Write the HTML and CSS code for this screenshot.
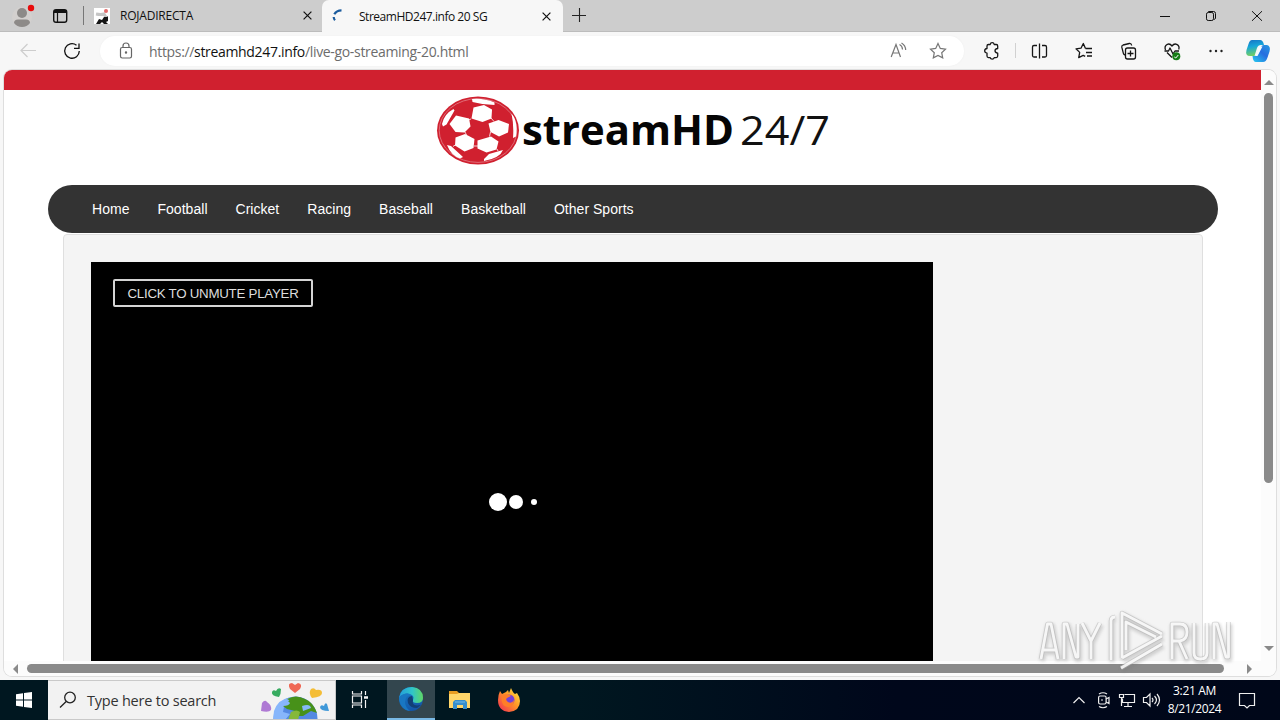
FILE: index.html
```html
<!DOCTYPE html>
<html lang="en">
<head>
<meta charset="utf-8">
<title>StreamHD247.info 20 SG</title>
<link rel="stylesheet" href="styles.css">
</head>
<body>
<div class="desktop">
  <header class="tabs">
    <svg class="profile" width="48" height="32" viewBox="0 0 48 32"><circle cx="22" cy="17" r="10" fill="#d3d0ce"/><circle cx="22" cy="13" r="5" fill="#8d8a88"/><path d="M14 23q0-3.500 4-3.500h8q4 0 4 3.500q-3 4-8 4t-8-4Z" fill="#8d8a88"/><circle cx="31" cy="8" r="3.200" fill="#e80c0c"/></svg>
    <svg class="workspace" width="35" height="32" viewBox="48 0 35 32"><rect x="53.700" y="9.700" width="13" height="12.600" rx="2.300" fill="none" stroke="#111" stroke-width="1.400"/><path d="M54 11.500h13" stroke="#111" stroke-width="3"/><path d="M57.500 12v10" stroke="#111" stroke-width="1.200"/></svg>
    <div class="tab tab-idle">
      <svg width="16" height="16" viewBox="0 0 16 16"><path fill="#fff" d="M0 0h16v16H0z"/><path d="M2 6q5 1 8 0l3 5" stroke="#c5c5c5" stroke-width="3" fill="none"/><circle cx="12" cy="3" r="2" fill="#e36a6a"/><path d="M2 16l3-5 3 1 2-3 3 0 1-1v5l-2 1 2 2h-4l-2-2-2 2Z" fill="#171717"/></svg>
      <span class="title title-a">ROJADIRECTA</span>
      <svg class="x" width="9" height="9" viewBox="0 0 9 9"><path d="M.6.6l7.800 7.800M8.400.6L.6 8.400"/></svg>
    </div>
    <div class="tab tab-on">
      <svg width="14" height="16" viewBox="331 7 14 16"><path d="M341.500 9.300Q336.500 9.300 334.300 13.300M333.700 16Q333.800 18 335 19.300" fill="none" stroke="#1b5c9e" stroke-width="2.200"/></svg>
      <span class="title title-b">StreamHD247.info 20 SG</span>
      <svg class="x" width="9" height="9" viewBox="0 0 9 9"><path d="M.6.6l7.800 7.800M8.400.6L.6 8.400"/></svg>
    </div>
    <svg class="plus" width="14" height="14" viewBox="0 0 14 14"><path d="M0 7.500h14M7.500 0v14" stroke="#222" stroke-width="1.100"/></svg>
    <svg class="window-buttons" width="138" height="32" viewBox="1142 0 138 32" fill="none" stroke="#111"><path d="M1160 16.500h10M1252 11.200l10 9.600M1262 11.200l-10 9.600"/><rect x="1206.500" y="12.500" width="7" height="8" rx="1.700"/><path d="M1208.500 12v-.5h5q2 0 2 2v5l-1.500 1"/></svg>
  </header>

  <div class="toolbar">
    <svg class="nav-icons" width="100" height="38" viewBox="0 32 100 38" fill="none"><path d="M20.500 50.500H36M27.500 44L21 50.500l6.500 6.500" stroke="#cdcdcd" stroke-width="1.200"/><path d="M76.500 45.200A7.300 7.300 0 1 0 79.300 51M79 43.500v4.800h-5" stroke="#111" stroke-width="1.300"/></svg>
    <div class="address">
      <svg width="14" height="18" viewBox="119 42 14 18" fill="none" stroke="#666" stroke-width="1.200"><rect x="120.500" y="47.500" width="11" height="10.500" rx="1.700"/><path d="M123 47v-1q0-3 3-3t3 3v1"/><circle cx="126" cy="52.500" r=".6" fill="#666"/></svg>
      <span class="url">https://<b>streamhd247.info</b>/live-go-streaming-20.html</span>
      <svg class="address-tools" width="84" height="30" viewBox="880 36 84 30" fill="none" stroke="#777" stroke-width="1.200"><path d="M891.200 57l4.800-12.500L900.500 57M893 53h6M899.500 44.500q3 1.500 3 5M901.500 43q4 2.300 4.200 7"/><path d="M938 43.500l2.300 4.900 5.200.7-3.800 3.600 1 5.200-4.700-2.500-4.700 2.500 1-5.200-3.800-3.600 5.200-.7Z"/></svg>
    </div>
    <svg class="tools" width="316" height="38" viewBox="964 32 316 38" fill="none" stroke="#161616" stroke-width="1.300" stroke-linejoin="round">
      <path d="M988.500 44.500h1.700q.3-1.800 2-1.800t2 1.800h2q1.500 0 1.500 1.500v2.500q-2.700.3-2.700 2.300t2.700 2.300v3q0 1.500-1.500 1.500h-2q-.3 1.600-2 1.600t-2-1.600h-1.700q-1.500 0-1.500-1.500v-3q-2.300-.3-2.300-2.300t2.300-2.300V46q0-1.500 1.500-1.500Z"/>
      <path d="M1015.500 43v15" stroke="#d1d1d1" stroke-width="1"/>
      <path d="M1037 45.500h-3q-1.500 0-1.500 1.500v8.500q0 1.500 1.500 1.500h3M1042 45.500h3q1.500 0 1.500 1.500v8.500q0 1.500-1.500 1.500h-3M1039.500 43.500v15"/>
      <path d="M1085.500 48.500l-2.200-5-2.300 4.700-5 .6 3.700 3.600-1 5.200 4.500-2.300 2 1M1085.500 48.500h6.500M1086 52.500h6M1087 56h5"/>
      <rect x="1125.500" y="48" width="10" height="11" rx="2"/><path d="M1130.500 50.500v6M1127.500 53.500h6M1125 55q-1.500-.3-1.700-1.800l-1.500-6q-.3-1.700 1.300-2.200l6.200-1.500q2-.3 2.400 2"/>
      <path d="M1172 57.500l-5-5M1165.500 50q-1.500-4 1.800-5.700 2.700-1 4.700 1.700 2-2.700 4.700-1.700 3.300 1.700 2 5.200M1164.500 51h4l1.500-3 3 6 2-3h4"/><circle cx="1176.300" cy="56.300" r="4" fill="#167d16" stroke="none"/><path d="M1174.300 57l1.500 1 2.500-3" stroke="#fff" stroke-width="1"/>
      <g fill="#222" stroke="none"><circle cx="1210.500" cy="51" r="1.200"/><circle cx="1216" cy="51" r="1.200"/><circle cx="1221.500" cy="51" r="1.200"/></g>
      <defs><linearGradient id="cp1" x1="0" y1="0" x2=".2" y2="1"><stop offset="0" stop-color="#1672c4"/><stop offset=".45" stop-color="#15a6d9"/><stop offset="1" stop-color="#72cf65"/></linearGradient><linearGradient id="cp2" x1="1" y1="0" x2=".2" y2="1"><stop offset="0" stop-color="#269ae2"/><stop offset=".5" stop-color="#286ddf"/><stop offset="1" stop-color="#27bced"/></linearGradient></defs>
      <path d="M1252 40h8q3 0 4 5h-3q-3 0-4 3l-2.500 8h-4.500q-5 0-3.500-6l2-6q1.200-4 3.500-4Z" fill="url(#cp1)" stroke="none"/><path d="M1264 45h3q4 1 2.500 6.500l-2 6q-1.500 4.500-4.500 4.500h-7q-3 0-3.500-6h2q3 0 4-3l2-5q1-3 3.500-3Z" fill="url(#cp2)" stroke="none"/><path d="M1259.500 46.500h3L1257.500 56h-2Z" fill="#f5fbff" stroke="none"/>
    </svg>
  </div>

  <main class="browser-view">
    <div class="page">
      <div class="red-bar"></div>
      <svg class="brand" width="400" height="95" viewBox="433 90 400 95">
        <ellipse cx="478" cy="130.500" rx="41" ry="34" fill="#d0202f"/><ellipse cx="478" cy="130.500" rx="38.800" ry="31.900" fill="none" stroke="#eaa0a7" stroke-width=".6"/>
        <g fill="#fff"><path d="M473.500 107.500l10.500-2.500 8 4.500-.5 9-9 3.500-11-3.500Z"/><path d="M456 115.500l13 3 1.500 8-6 6-9-.5-6-8Z"/><path d="M488.500 123.500l10-3.500 10.500 4-1 8.500-9 4-8.500-4.500Z"/><path d="M455.500 137.500l9.500-3.500 9.500 5-1 9-9 3.500-9.500-6Z"/><path d="M477.500 140.500l13.500-4 7.500 5-2 8-10 3-9-4Z"/><path d="M472 99q12-1 22.500 3.500l0 2.500q-11 0-22-3ZM442 124q2-10 11.500-15l1 1.500-8 14-3.500 2ZM511.500 113.500q7 8 4.500 23l-3 1.500q1-13-1.500-24.500ZM447 145l4 1 12 11-3 1.500q-9-3-13-13.500ZM484 159l5-5 14-4q-3 8-19 11Z"/></g>
        <path d="M491 118l3 3.500M471 119l-2.500 1M465 132l1.500 3M490.500 132l-1 4.500M474 146h4M456 144.500l-3 2M497 149l1 2" stroke="#fff" stroke-width=".8"/>
        <text class="brand-bold" x="522" y="145" textLength="212" lengthAdjust="spacingAndGlyphs">streamHD</text>
        <text class="brand-light" x="740" y="145" textLength="90" lengthAdjust="spacingAndGlyphs">24/7</text>
      </svg>
      <nav class="menu"><a>Home</a><a>Football</a><a>Cricket</a><a>Racing</a><a>Baseball</a><a>Basketball</a><a>Other Sports</a></nav>
      <section class="content"><div class="player">
        <button class="unmute">CLICK TO UNMUTE PLAYER</button>
        <svg class="loading" width="50" height="20" viewBox="488 492 50 20" fill="#fff"><circle cx="498" cy="502" r="9"/><circle cx="516" cy="502" r="7"/><circle cx="534" cy="502" r="3"/></svg>
      </div></section>
    </div>
    <div class="scroll-y"><i class="arrow-up"></i><div class="thumb-y"></div><i class="arrow-down"></i></div>
    <div class="scroll-x"><i class="arrow-left"></i><div class="thumb-x"></div><i class="arrow-right"></i></div>
  </main>

  <svg class="watermark" width="204" height="68" viewBox="1034 607 204 68" fill="none" stroke-linejoin="round">
    <defs><g id="mark"><path d="M1041 659l6.500-35h3.500l7 35M1044 650h11M1064 659v-35h3l9 33h2v-33M1082 623l9 18v18M1091 641l9-18M1172 659v-35h8q7 0 7 8t-7 9h-8M1179 641l8 18M1194 623v30q0 6 6.500 6t6.500-6v-30M1214 659v-35h3l9 33h2.500v-35"/><path d="M1126 650v-28l30 15M1122 658v-45l40 21M1122 658l40-22M1115 617q-4 0-4 4v39M1121 668l41-24"/></g></defs>
    <use href="#mark" class="mark-shade" x="1" y="2"/><use href="#mark" class="mark-edge"/><use href="#mark" class="mark-line"/>
  </svg>

  <footer class="taskbar">
    <div class="start"><svg width="16" height="16" viewBox="0 0 16 16"><path d="M0 2.200L7 1.200v6.300H0ZM8 1l8-1v7.500H8ZM0 8.500h7v6.300l-7-1ZM8 8.500h8V16l-8-1Z" fill="#fff"/></svg></div>
    <div class="search">
      <svg width="18" height="20" viewBox="0 0 18 20" fill="none" stroke="#222" stroke-width="1.300"><circle cx="11" cy="7.500" r="5.300"/><path d="M7.200 11.500L1 17.500"/></svg>
      <span>Type here to search</span>
      <svg class="earth" width="76" height="38" viewBox="260 681 76 38"><circle cx="296.500" cy="718.500" r="22" fill="#5489e2"/><path d="M275 711q4-12 17-14l5 3-5 5-7 2-1 5 7 2-5 6h-12Z" fill="#87b6fb"/><path d="M288 699q9-5 18 0 8 3 12 14l-6-2-8 5h-6l-2-5-8-2-4-3q6 0 7-3l-2-2q3-.5-1-2Z" fill="#479119"/><path d="M303 706q8-3 9 2l-8 3Z" fill="#86b9f7"/><path d="M292 712q6-3 9 0l-2 8h-10Z" fill="#85b83b"/><path d="M296 693l-5-4q-3-6 2-6l3 2 3-2q5 1 2 6Z" fill="#ef6855"/><path d="M280 697q-8-1-7-5 1-3 4-1 2-4 5-2 0 5-2 8Z" fill="#37ab60"/><path d="M313 698q-4-5-1-9 3-2 5 1 6-1 6 3 0 4-10 5Z" fill="#f4bd35"/><path d="M262 711l1-8q3-4 5-1 5 3 4 8-2 3-10 1Z" fill="#af7ad4"/><path d="M330 711q-9 0-9-4 1-3 4-1 1-4 3-2Z" fill="#3f98d8"/></svg>
    </div>
    <div class="app task-view"><svg width="18" height="18" viewBox="0 0 18 18" fill="none" stroke="#f3f3f3" stroke-width="1.200"><path d="M1.500 0v3h9V0M1.500 17v-3h9v3M1.500 5h9v7h-9ZM14.500 0v4M14.500 9v8"/><path d="M13 6.500h4" stroke-width="2.500"/></svg></div>
    <div class="app edge"><svg width="26" height="26" viewBox="0 0 26 26"><defs><linearGradient id="eg" x1="0" x2="1"><stop stop-color="#249ddb"/><stop offset=".55" stop-color="#30c5c9"/><stop offset="1" stop-color="#60d764"/></linearGradient><linearGradient id="eb" y2="1" x2=".5"><stop stop-color="#1682cc"/><stop offset="1" stop-color="#1456a8"/></linearGradient></defs><circle cx="13" cy="13" r="12" fill="url(#eb)"/><path d="M1 12Q3 1 14 1q11 1 11 11 0 5-6 5-5 0-4-3 2-5-4-6-6-1-10 4Z" fill="url(#eg)"/><path d="M14 10q-6 1-4 7 2 5 9 5l4-3q-10 2-8-5Z" fill="#123f76"/><path d="M1 11q9-7 13-1-6-2-7 6 0 5 5 9Q2 24 1 11Z" fill="#1977c2"/></svg></div>
    <div class="app files"><svg width="24" height="20" viewBox="0 0 24 20"><path d="M1 1h8l2 2h11v14H1Z" fill="#e89d22"/><path d="M1 4h8l2-1h11v15H1Z" fill="#ffd66a"/><path d="M5 19v-7l2-2h10l2 2v7h-4v-4H9v4Z" fill="#358ecd"/><path d="M7 12h10" stroke="#71b9e9"/></svg></div>
    <div class="app firefox"><svg width="24" height="26" viewBox="0 0 24 26"><defs><linearGradient id="ff" x1="1" y1="0" x2="0" y2="1"><stop stop-color="#fff044"/><stop offset=".45" stop-color="#ff9627"/><stop offset="1" stop-color="#f02757"/></linearGradient></defs><path d="M3 4l2 3 4-2 2-2 1 3 2-5q2 5 4 6l2-1q3 4 3 8 0 10-11 11Q1 24 1 13q0-5 2-9Z" fill="url(#ff)"/><circle cx="12" cy="13" r="5.500" fill="#7541d7"/><path d="M5 8q5-2 9 1l-4 2q-2 2 1 4 4 2 6-2 0 7-6 7-8-1-6-12Z" fill="#ff7e28"/></svg></div>
    <svg class="tray" width="92" height="40" viewBox="1070 680 92 40" fill="none" stroke="#eee" stroke-width="1.200"><path d="M1073.500 703l5.500-5.500 5.500 5.500M1099 694q4-2.500 8 0M1099 706.500q4 2.500 8 0"/><rect x="1098.600" y="696" width="7.500" height="8" rx="1.500"/><path d="M1106 699l3-1.500v6l-3-1.500M1101 700h2M1124.500 694.500h10v8h-12v-4M1119.500 694.500h4v3h-4ZM1121.500 697v9M1128 703v3M1124 706.500h8M1143.500 697.500h3l3.500-3.500v12l-3.500-3.500h-3ZM1152 698q2 2 0 4M1154.500 696q4 4 0 8M1157 694q5 6 0 12"/></svg>
    <div class="clock"><span>3:21 AM</span><span class="date">8/21/2024</span></div>
    <svg class="notification" width="20" height="20" viewBox="0 0 20 20" fill="none" stroke="#eee" stroke-width="1.200"><path d="M2.500 3.500h15v12h-5L10 18l-2.500-2.500h-5Z"/></svg>
  </footer>
</div>
</body>
</html>
```

FILE: styles.css
```css
* { box-sizing: border-box; }
body { margin: 0; overflow: hidden; font-family: "Open Sans", sans-serif; }
svg { display: block; flex: none; }
.desktop { position: relative; display: flex; flex-direction: column; width: 1280px; height: 720px; overflow: hidden; background: #f7f7f7; }
.tabs { display: flex; height: 32px; flex: none; background: #cdcdcd; border-bottom: 1px solid #bcbcbc; }
.tab { display: flex; align-items: center; height: 32px; font-size: 12px; white-space: nowrap; }
.tab-idle { width: 239px; height: 31px; padding-left: 10px; border: solid; border-width: 0 0 0 1px; border-image: linear-gradient(transparent 20%, #777 20%, #777 80%, transparent 80%) 1; }
.tab-on { width: 241px; padding-left: 9px; border-radius: 7px 7px 0 0; background: #f7f7f7; }
.title { color: #111; line-height: 31px; }
.title-a { width: 183px; margin-left: 10px; letter-spacing: -.22px; }
.title-b { width: 183px; margin-left: 14px; letter-spacing: -.47px; }
.x { fill: none; stroke: #111; stroke-width: 1.2; }
.plus { margin: 8px 0 0 9px; }
.window-buttons { margin-left: auto; }
.toolbar { display: flex; height: 38px; flex: none; align-items: center; }
.address { display: flex; align-items: center; width: 864px; height: 30px; padding-left: 19px; border-radius: 15px; background: #fff; box-shadow: 0 0 2px #eee; }
.url { margin-left: 16px; color: #6c6c6c; font-size: 14px; letter-spacing: -.33px; white-space: nowrap; }
.url b { color: #111; font-weight: 400; }
.address-tools { margin-left: auto; }
.browser-view { display: grid; grid-template: 591px 15px / 1257px 15px; width: 1272px; height: 606px; margin-left: 4px; overflow: hidden; border-radius: 8px; background: #fcfcfc; box-shadow: 0 0 0 1px #dedede; }
.page { overflow: hidden; background: #fff; }
.red-bar { height: 20px; background: #d0202f; }
.brand { margin-left: 429px; }
.brand-bold { font: 700 40.5px "Open Sans", sans-serif; fill: #050505; }
.brand-light { font: 400 41px "Open Sans", sans-serif; fill: #111; }
.menu { display: flex; align-items: center; width: 1170px; height: 48px; margin-left: 44px; padding-left: 44px; gap: 28px; border-radius: 24px; background: #333; color: #fff; font: 14px "Liberation Sans", Arial, sans-serif; letter-spacing: .03px; white-space: nowrap; }
.content { width: 1140px; height: 460px; margin: 1px 0 0 59px; padding: 27px; border: 1px solid #dfdfdf; border-radius: 4px; background: #f4f4f4; }
.player { width: 842px; height: 480px; padding: 17px 22px; background: #000; }
.unmute { display: block; width: 200px; height: 28px; padding: 0; border: 2px solid #d4d4d4; border-radius: 2px; background: #000; color: #ddd; font: 13.333px "Liberation Sans", Arial, sans-serif; letter-spacing: -.27px; white-space: nowrap; }
.loading { margin: 185px 0 0 375px; }
.scroll-y { grid-column: 2; grid-row: 1 / 3; display: flex; flex-direction: column; align-items: center; padding-top: 10px; background: #fcfcfc; }
.arrow-up, .arrow-down { width: 0; height: 0; border-left: 5px solid transparent; border-right: 5px solid transparent; }
.arrow-up { border-bottom: 5px solid #8a8a8a; }
.thumb-y { width: 9px; height: 390px; margin-top: 8px; border-radius: 5px; background: #8a8a8a; }
.arrow-down { margin-top: 163px; border-top: 5px solid #8a8a8a; }
.scroll-x { grid-column: 1; grid-row: 2; display: flex; align-items: center; padding-left: 9px; background: #fcfcfc; }
.arrow-left, .arrow-right { width: 0; height: 0; border-top: 5px solid transparent; border-bottom: 5px solid transparent; }
.arrow-left { border-right: 5px solid #8a8a8a; }
.thumb-x { width: 1197px; height: 9px; margin-left: 9px; border-radius: 5px; background: #8a8a8a; }
.arrow-right { margin-left: 23px; border-left: 5px solid #8a8a8a; }
.watermark { position: absolute; left: 1034px; top: 607px; }
.mark-shade { stroke: #777; stroke-opacity: .28; stroke-width: 6px; filter: blur(1.5px); }
.mark-edge { stroke: #b0b0b0; stroke-opacity: .5; stroke-width: 4.5px; filter: blur(.6px); }
.mark-line { stroke: #fff; stroke-opacity: .85; stroke-width: 2.8px; }
.taskbar { display: flex; height: 40px; flex: none; margin-top: 4px; align-items: center; background: linear-gradient(90deg, #001720 0%, #001720 45%, #00071b 70%, #000719 100%); }
.start { display: grid; place-items: center; width: 48px; height: 40px; }
.search { display: flex; align-items: center; width: 288px; height: 40px; padding-left: 11px; border: 1px solid #c9c9c9; border-left: 0; background: #f2f2f2; color: #333; font-size: 14.5px; }
.search span { margin-left: 10px; letter-spacing: -.22px; white-space: nowrap; }
.earth { margin-left: auto; }
.app { display: grid; place-items: center; height: 40px; }
.task-view { width: 51px; padding-right: 3px; }
.edge { width: 48px; background: #33464e; border-bottom: 2px solid #79b9e5; }
.files { width: 49px; }
.firefox { width: 50px; }
.tray { margin-left: auto; }
.clock { display: flex; flex-direction: column; align-items: center; width: 65px; color: #fff; font-size: 12px; line-height: 18px; letter-spacing: -.35px; white-space: nowrap; }
.notification { margin: 0 23px 0 10px; }
```
